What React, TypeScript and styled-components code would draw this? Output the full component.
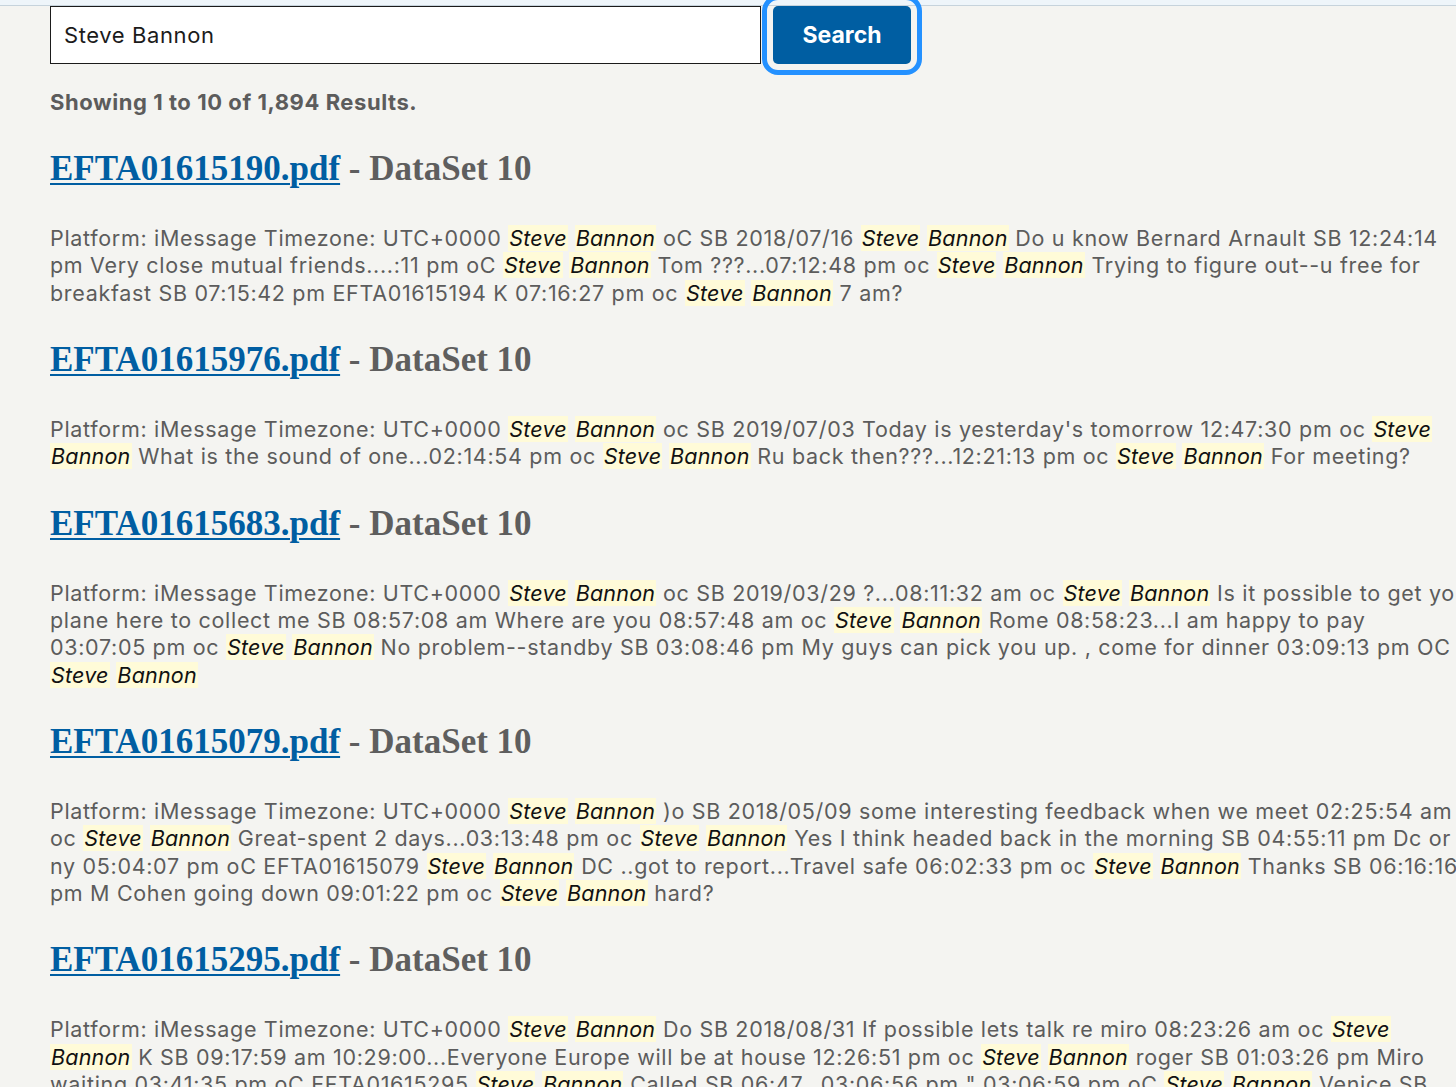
import React from "react";
import styled, { createGlobalStyle } from "styled-components";

const GlobalStyle = createGlobalStyle`
  html, body {
    margin: 0;
    padding: 0;
    background: #f4f4f1;
    overflow: hidden;
  }
  body {
    font-family: Inter, "Liberation Sans", sans-serif;
    color: #5c5c5c;
  }
`;

const Page = styled.div`
  width: 1456px;
  height: 1087px;
  overflow: hidden;
  background: #f4f4f1;
`;

const TopStrip = styled.div`
  height: 5px;
  background: #eef5fa;
  border-bottom: 1px solid #c6d3dc;
`;

const Main = styled.main`
  width: 1425px;
  padding-left: 50px;
`;

const SearchForm = styled.form`
  display: flex;
  align-items: flex-start;
  gap: 12px;
`;

const SearchInput = styled.input`
  box-sizing: border-box;
  width: 711px;
  height: 58px;
  margin: 0;
  padding: 0 13px;
  border: 1px solid #1b1b1b;
  background: #ffffff;
  color: #1b1b1b;
  font-family: Inter, "Liberation Sans", sans-serif;
  font-size: 22px;
  letter-spacing: 0.6px;
  outline: none;
`;

const SearchButton = styled.button`
  box-sizing: border-box;
  width: 138px;
  height: 58px;
  margin: 0;
  border: none;
  border-radius: 5px;
  background: #005ea2;
  color: #ffffff;
  font-family: Inter, "Liberation Sans", sans-serif;
  font-size: 23px;
  font-weight: 700;
  outline: 5px solid #2491ff;
  outline-offset: 6px;
  cursor: pointer;
`;

const Summary = styled.p`
  margin: 24px 0 32px;
  font-size: 22px;
  line-height: 28px;
  font-weight: 700;
  letter-spacing: 0.55px;
  color: #5c5c5c;
`;

const ResultList = styled.section`
  display: flex;
  flex-direction: column;
`;

const Result = styled.article`
  display: flex;
  flex-direction: column;
`;

const Title = styled.h2`
  margin: 0 0 35px;
  font-family: "Liberation Serif", "Times New Roman", serif;
  font-size: 35px;
  line-height: 42px;
  font-weight: 700;
  color: #5e5e5e;
  white-space: nowrap;
`;

const FileLink = styled.a`
  color: #005ea2;
  text-decoration: underline;
  text-decoration-thickness: 2px;
  text-underline-offset: 3px;
`;

const Snippet = styled.p`
  margin: 0 0 32px;
  font-size: 21.5px;
  line-height: 27.35px;
  letter-spacing: 0.68px;
  color: #5c5c5c;
  white-space: nowrap;
`;

const Mark = styled.mark`
  background: #fffbd8;
  color: #111111;
  font-style: italic;
  letter-spacing: 0.2px;
  padding: 0 1px;
`;

type ResultData = { file: string; lines: string[] };

const results: ResultData[] = [
  {
    file: "EFTA01615190.pdf",
    lines: [
      "Platform: iMessage Timezone: UTC+0000 Steve Bannon oC SB 2018/07/16 Steve Bannon Do u know Bernard Arnault SB 12:24:14",
      "pm Very close mutual friends....:11 pm oC Steve Bannon Tom ???...07:12:48 pm oc Steve Bannon Trying to figure out--u free for",
      "breakfast SB 07:15:42 pm EFTA01615194 K 07:16:27 pm oc Steve Bannon 7 am?",
    ],
  },
  {
    file: "EFTA01615976.pdf",
    lines: [
      "Platform: iMessage Timezone: UTC+0000 Steve Bannon oc SB 2019/07/03 Today is yesterday's tomorrow 12:47:30 pm oc Steve",
      "Bannon What is the sound of one...02:14:54 pm oc Steve Bannon Ru back then???...12:21:13 pm oc Steve Bannon For meeting?",
    ],
  },
  {
    file: "EFTA01615683.pdf",
    lines: [
      "Platform: iMessage Timezone: UTC+0000 Steve Bannon oc SB 2019/03/29 ?...08:11:32 am oc Steve Bannon Is it possible to get your",
      "plane here to collect me SB 08:57:08 am Where are you 08:57:48 am oc Steve Bannon Rome 08:58:23...I am happy to pay",
      "03:07:05 pm oc Steve Bannon No problem--standby SB 03:08:46 pm My guys can pick you up. , come for dinner 03:09:13 pm OC",
      "Steve Bannon",
    ],
  },
  {
    file: "EFTA01615079.pdf",
    lines: [
      "Platform: iMessage Timezone: UTC+0000 Steve Bannon )o SB 2018/05/09 some interesting feedback when we meet 02:25:54 am",
      "oc Steve Bannon Great-spent 2 days...03:13:48 pm oc Steve Bannon Yes I think headed back in the morning SB 04:55:11 pm Dc or",
      "ny 05:04:07 pm oC EFTA01615079 Steve Bannon DC ..got to report...Travel safe 06:02:33 pm oc Steve Bannon Thanks SB 06:16:16",
      "pm M Cohen going down 09:01:22 pm oc Steve Bannon hard?",
    ],
  },
  {
    file: "EFTA01615295.pdf",
    lines: [
      "Platform: iMessage Timezone: UTC+0000 Steve Bannon Do SB 2018/08/31 If possible lets talk re miro 08:23:26 am oc Steve",
      "Bannon K SB 09:17:59 am 10:29:00...Everyone Europe will be at house 12:26:51 pm oc Steve Bannon roger SB 01:03:26 pm Miro",
      "waiting 03:41:35 pm oC EFTA01615295 Steve Bannon Called SB 06:47...03:06:56 pm \" 03:06:59 pm oC Steve Bannon Venice SB",
    ],
  },
];

function renderLine(line: string) {
  return line
    .split(/(Steve|Bannon)/)
    .map((part, i) =>
      part === "Steve" || part === "Bannon" ? (
        <Mark key={i}>{part}</Mark>
      ) : (
        <React.Fragment key={i}>{part}</React.Fragment>
      )
    );
}

export default function App() {
  return (
    <Page>
      <GlobalStyle />
      <TopStrip />
      <Main>
        <SearchForm onSubmit={(e) => e.preventDefault()}>
          <SearchInput type="text" defaultValue="Steve Bannon" aria-label="Search" />
          <SearchButton type="submit">Search</SearchButton>
        </SearchForm>
        <Summary>Showing 1 to 10 of 1,894 Results.</Summary>
        <ResultList>
          {results.map((r) => (
            <Result key={r.file}>
              <Title>
                <FileLink href="#">{r.file}</FileLink> - DataSet 10
              </Title>
              <Snippet>
                {r.lines.map((line, li) => (
                  <React.Fragment key={li}>
                    {li > 0 && <br />}
                    {renderLine(line)}
                  </React.Fragment>
                ))}
              </Snippet>
            </Result>
          ))}
        </ResultList>
      </Main>
    </Page>
  );
}
